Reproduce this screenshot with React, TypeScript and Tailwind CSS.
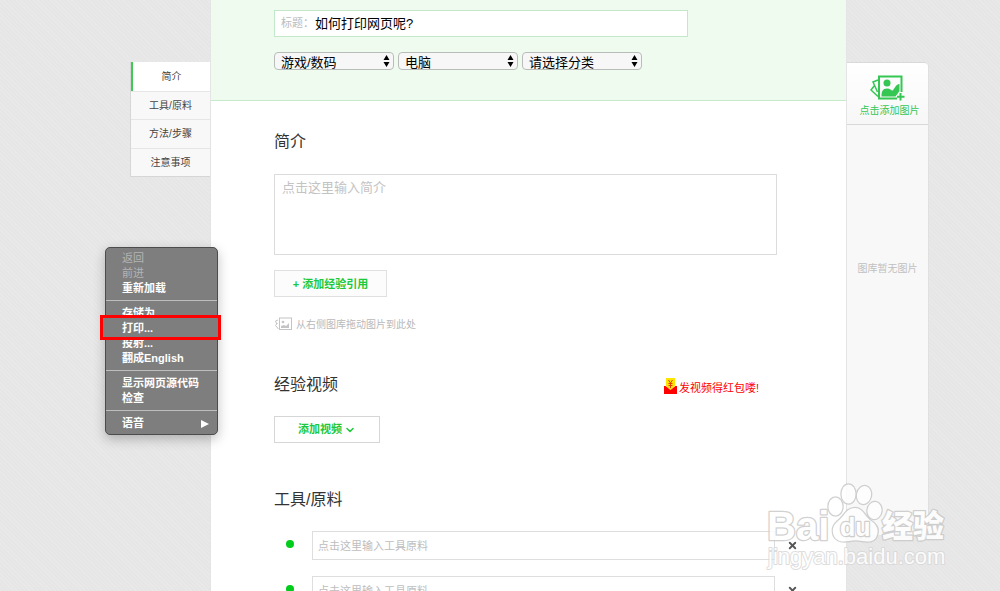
/**
 * Experience editor page
 * Left: section nav, centre: the form, right: picture library
 */

import type { ReactNode } from "react";
import { ChevronDown, X } from "lucide-react";

const NAV_ITEMS = ["简介", "工具/原料", "方法/步骤", "注意事项"];

const CATEGORIES = [
  { label: "一级分类", value: "游戏/数码" },
  { label: "二级分类", value: "电脑" },
  { label: "三级分类", value: "请选择分类" },
];

interface MenuItem {
  label: string;
  disabled?: boolean;
  marked?: boolean;
  submenu?: boolean;
}

const MENU_GROUPS: MenuItem[][] = [
  [{ label: "返回", disabled: true }, { label: "前进", disabled: true }, { label: "重新加载" }],
  [{ label: "存储为" }, { label: "打印...", marked: true }, { label: "投射..." }, { label: "翻成English" }],
  [{ label: "显示网页源代码" }, { label: "检查" }],
  [{ label: "语音", submenu: true }],
];

function SectionNav() {
  return (
    <nav className="mt-[62px] grid h-[115px] grid-rows-4 self-start border-l border-b border-[#d6d6d6] bg-[#f8f8f8] text-[10px] text-[#444]">
      {NAV_ITEMS.map((item, i) => (
        <a
          key={item}
          href="#"
          className={
            i === 0
              ? "flex items-center justify-center border-l-2 border-[#3ccb55] bg-white"
              : "flex items-center justify-center border-t border-[#e6e6e6]"
          }
        >
          {item}
        </a>
      ))}
    </nav>
  );
}

function CategorySelect({ label, value }: { label: string; value: string }) {
  return (
    <div className="relative">
      <select
        aria-label={label}
        className="block h-[18px] w-[120px] appearance-none rounded-[4px] border border-[#b9bdb9] bg-[#f7f7f7] pt-0.5 pl-1.5 text-[13px] leading-4 text-black"
      >
        <option>{value}</option>
      </select>
      <svg className="pointer-events-none absolute top-[3px] right-1 h-3 w-[7px]" viewBox="0 0 7 12">
        <path d="M3.5 0 6.5 5h-6zM3.5 12 .5 7h6z" fill="#000" />
      </svg>
    </div>
  );
}

function Header() {
  return (
    <header className="h-[101px] border-b border-[#c6ebcb] bg-[#f0fbf0] pt-[10px] pr-[69px] pl-[63px]">
      <div className="flex h-[27px] w-full max-w-[414px] items-center border border-[#c3e8c9] bg-white pl-1.5">
        <label htmlFor="title" className="w-[34px] text-[11px] text-[#bbb]">
          标题：
        </label>
        <input
          id="title"
          defaultValue="如何打印网页呢?"
          className="min-w-0 flex-1 text-[13px] text-black outline-none"
        />
      </div>
      <div className="mt-[15px] flex gap-1">
        {CATEGORIES.map((c) => (
          <CategorySelect key={c.label} label={c.label} value={c.value} />
        ))}
      </div>
    </header>
  );
}

function Heading({ children }: { children: ReactNode }) {
  return <h2 className="text-[16px] leading-6 text-[#333]">{children}</h2>;
}

function IntroSection() {
  return (
    <section className="pt-[29px] pr-[69px] pl-[63px]">
      <Heading>简介</Heading>
      <textarea
        aria-label="简介"
        placeholder="点击这里输入简介"
        className="mt-5 block h-[81px] w-full resize-none border border-[#dcdcdc] px-[7px] py-1 text-[13px] leading-[18px] outline-none placeholder:text-[#c3c3c3]"
      />
      <button className="mt-[15px] flex h-[27px] w-[113px] items-center justify-center border border-[#e0e0e0] bg-[#fcfcfc] pt-0.5 text-[11px] font-bold text-[#1bc93a]">
        + 添加经验引用
      </button>
      <p className="mt-[19px] flex h-4 items-center gap-1 text-[10px] text-[#b9b9b9]">
        <svg className="h-[14px] w-[18px]" viewBox="0 0 18 14" fill="none" stroke="#c4c4c4">
          <rect x="5.5" y="1" width="12" height="11.5" />
          <path d="M7 11V9l3-1 2 1 3-3v5z" fill="#c4c4c4" stroke="none" />
          <circle cx="9" cy="5" r="1.3" fill="#c4c4c4" stroke="none" />
          <path d="M4 3 1.500 4l1.200 3M3.500 6 1.500 8.500 4.500 12" />
        </svg>
        从右侧图库拖动图片到此处
      </p>
    </section>
  );
}

function VideoSection() {
  return (
    <section className="pt-[41px] pr-[69px] pl-[63px]">
      <div className="flex items-center justify-between">
        <Heading>经验视频</Heading>
        <a href="#" className="mt-1 mr-[18px] flex items-end gap-0.5 text-[11px] leading-4 text-[#f00]">
          <svg className="mb-0.5 h-4 w-[13px]" viewBox="0 0 13 16">
            <path d="M2 0h9v8l-4.500 4L2 8z" fill="#ffe600" />
            <path d="M0 8h1.500l5 4 5-4H13v8H0z" fill="#f00" />
            <path d="m4.500 2 2 3 2-3M6.500 5v5M4.500 5.500h4M4.500 7.500h4" fill="none" stroke="#e33b00" />
          </svg>
          发视频得红包喽!
        </a>
      </div>
      <button className="mt-[19px] flex h-[27px] w-[106px] items-center justify-center gap-0.5 border border-[#d6d6d6] bg-white text-[11px] font-bold text-[#1bc93a]">
        添加视频
        <ChevronDown className="size-3" strokeWidth={3} />
      </button>
    </section>
  );
}

function ToolsSection() {
  return (
    <section className="pt-[45px] pr-12 pl-[63px]">
      <Heading>工具/原料</Heading>
      <ul className="mt-[19px] flex flex-col gap-4">
        {[1, 2].map((n) => (
          <li key={n} className="flex items-center">
            <span className="mr-[18px] mb-1 ml-3 size-2 rounded-full bg-[#00cc1b]" />
            <input
              aria-label={`工具/原料 ${n}`}
              placeholder="点击这里输入工具原料"
              className="h-[29px] min-w-0 flex-1 border border-[#dedede] px-[5px] text-[11px] outline-none placeholder:text-[#bdbdbd]"
            />
            <button aria-label="删除" className="ml-3 text-[#555]">
              <X className="size-[11px]" strokeWidth={4} />
            </button>
          </li>
        ))}
      </ul>
    </section>
  );
}

function PictureLibrary() {
  return (
    <aside className="mt-[62px] h-[80vh] rounded-tr border-r border-[#e0e0e0] bg-[#f8f8f8] text-[10px]">
      <button className="flex h-[63px] w-full flex-col items-center rounded-tr border-t border-b border-[#d9d9d9] bg-linear-to-b from-white to-[#f7f7f7] pt-3 pl-1 text-[#35c653]">
        <svg className="mr-1 h-[26px] w-[35px]" viewBox="0 0 35 26" fill="none" stroke="#35c653">
          <path d="M27 23.500H9V1.500h22.500V17" strokeWidth="2" />
          <circle cx="17" cy="8" r="3.500" fill="#35c653" stroke="none" />
          <path d="M11.500 21.500c0-5 1-8 5.500-8 3.500 0 4.500 2.500 5.500 2 2-1 3-6.500 7-6.500v7l-4 5.500z" fill="#35c653" stroke="none" />
          <path d="M8 5 3 7l4.500 10M4.500 10.500 1 15l7 6.500" strokeWidth="1.500" />
          <path d="M30.500 18v7.500M27 21.800h7.500" strokeWidth="2" />
        </svg>
        <span className="mt-0.5 leading-4">点击添加图片</span>
      </button>
      <p className="mt-[136px] text-center leading-4 text-[#c0c0c0]">图库暂无图片</p>
    </aside>
  );
}

function ContextMenu() {
  return (
    <div
      role="menu"
      className="absolute top-[247px] left-[105px] w-[113px] rounded-[5px] border border-[#4c4c4c] bg-[#7e7e7e] pt-[3px] pb-[3px] text-[11px] font-bold text-white shadow-[0_4px_12px_rgba(0,0,0,0.25)]"
    >
      {MENU_GROUPS.map((group, i) => (
        <div key={i} className={i > 0 ? "mt-1 border-t border-[#bdbdbd] pt-[5px]" : ""}>
          {group.map((item) => (
            <div key={item.label} className="relative">
              {/* red frame round the print entry */}
              {item.marked && (
                <div className="absolute -top-1.5 -right-1 -bottom-1 -left-1.5 z-10 border-3 border-[#f00] bg-[#7e7e7e]" />
              )}
              <button
                role="menuitem"
                disabled={item.disabled}
                className={
                  item.marked
                    ? "relative z-20 flex h-[15px] w-full items-center pl-4"
                    : "flex h-[15px] w-full items-center justify-between pr-2 pl-4 disabled:font-normal disabled:text-[#b4b4b4]"
                }
              >
                {item.label}
                {item.submenu && (
                  <svg className="h-2 w-2" viewBox="0 0 8 8">
                    <path d="M0 0 8 4 0 8z" fill="#fff" />
                  </svg>
                )}
              </button>
            </div>
          ))}
        </div>
      ))}
    </div>
  );
}

function Watermark() {
  return (
    <svg
      className="pointer-events-none absolute right-[50px] bottom-[19px] h-[92px] w-[190px]"
      viewBox="-4 0 190 92"
      fill="#fff"
      stroke="#c9c9c9"
      paintOrder="stroke"
      strokeLinejoin="round"
      opacity="0.85"
      fontFamily="'Liberation Sans', 'Noto Sans CJK SC', sans-serif"
    >
      <g strokeWidth="2.500">
        <ellipse cx="71.500" cy="26.500" rx="7" ry="9" />
        <ellipse cx="84.500" cy="14" rx="7" ry="9.500" />
        <ellipse cx="100" cy="15" rx="7" ry="9" transform="rotate(12 100 15)" />
        <ellipse cx="110.500" cy="30.500" rx="7" ry="8.500" transform="rotate(8 110.500 30.500)" />
        <path d="M91 28c-9 0-11 9-17 13-6 5-6 10-4 15 3 6 9 6 15 5 5-1 9-1 13 0 7 1 13 1 15-6 2-6-1-11-6-14-6-4-8-13-16-13z" />
        <text x="76" y="56" fontSize="25" fontWeight="bold">du</text>
        <text x="3" y="60" fontSize="40" fontWeight="bold">Bai</text>
        <text x="118" y="57" fontSize="31" fontWeight="900">经验</text>
      </g>
      <text x="4" y="84" fontSize="22" strokeWidth="2" stroke="#d8d8d8">
        jingyan.baidu.com
      </text>
    </svg>
  );
}

export default function App() {
  return (
    <div className="relative h-screen overflow-hidden bg-[#e7e7e7] bg-[repeating-linear-gradient(45deg,#e9e9e9_0_1px,#e6e6e6_1px_3px)] pr-[7.1%] pl-[13%] font-['Liberation_Sans','Noto_Sans_CJK_SC',sans-serif]">
      <div className="grid h-full grid-cols-[80px_minmax(0,1fr)_82px]">
        <SectionNav />
        <main className="border-x border-[#e4e4e4] bg-white">
          <Header />
          <IntroSection />
          <VideoSection />
          <ToolsSection />
        </main>
        <PictureLibrary />
      </div>
      <Watermark />
      <ContextMenu />
    </div>
  );
}
